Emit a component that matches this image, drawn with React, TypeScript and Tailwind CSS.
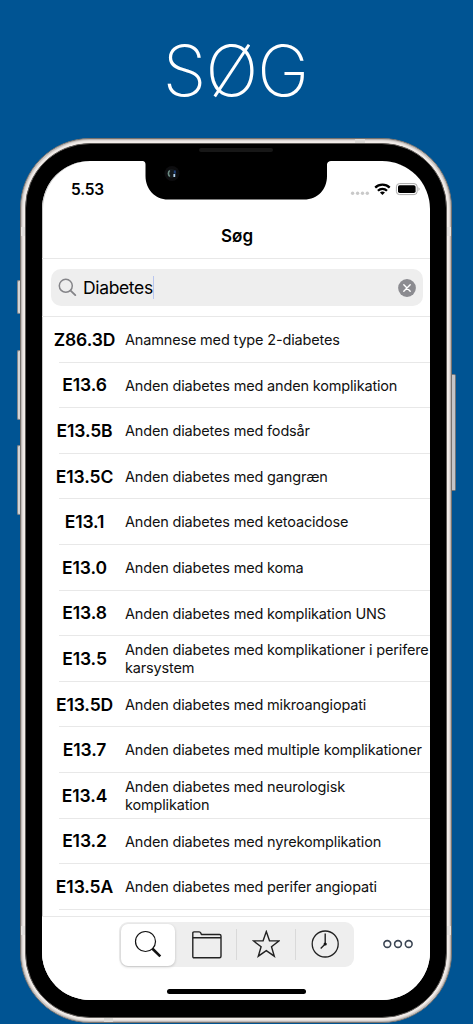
import React, { useState } from "react";

interface Diagnosis {
  code: string;
  title: string;
}

const diagnoses: Diagnosis[] = [
  { code: "Z86.3D", title: "Anamnese med type 2-diabetes" },
  { code: "E13.6", title: "Anden diabetes med anden komplikation" },
  { code: "E13.5B", title: "Anden diabetes med fodsår" },
  { code: "E13.5C", title: "Anden diabetes med gangræn" },
  { code: "E13.1", title: "Anden diabetes med ketoacidose" },
  { code: "E13.0", title: "Anden diabetes med koma" },
  { code: "E13.8", title: "Anden diabetes med komplikation UNS" },
  { code: "E13.5", title: "Anden diabetes med komplikationer i perifere karsystem" },
  { code: "E13.5D", title: "Anden diabetes med mikroangiopati" },
  { code: "E13.7", title: "Anden diabetes med multiple komplikationer" },
  { code: "E13.4", title: "Anden diabetes med neurologisk komplikation" },
  { code: "E13.2", title: "Anden diabetes med nyrekomplikation" },
  { code: "E13.5A", title: "Anden diabetes med perifer angiopati" },
];

function Notch() {
  return (
    <svg className="absolute left-[99px] top-[-1px]" width="192" height="40" viewBox="0 0 192 40">
      <path d="M0 0H192V1H190C188 1 186 2.500 186 4.500V16C186 29 177 39.500 163 39.500H27C14 39.500 4.500 29 4.500 16V4.500C4.500 2.500 3.500 1 1.500 1H0Z" fill="#000" />
      <circle cx="31" cy="13.500" r="7.500" fill="#0d0d0f" />
      <circle cx="30.500" cy="13.500" r="4.600" fill="#14181b" />
      <path d="M28.800 10.500a4 4 0 0 0 0 6" stroke="#6c8c83" strokeWidth="1.600" fill="none" />
      <path d="M33.800 10.500v3" stroke="#1c3e78" strokeWidth="2" />
      <path d="M33.300 14v3" stroke="#b4d4ee" strokeWidth="1.800" />
    </svg>
  );
}

function StatusBar() {
  return (
    <div className="flex h-[57px] shrink-0 justify-between pl-[29px] pr-[10px] pt-[19px]">
      <span className="text-[15.5px] font-semibold leading-[19px] tracking-[-0.2px]">5.53</span>
      <svg width="70" height="18" viewBox="0 0 70 18">
        <g fill="#c9c9c9">
          <circle cx="2.600" cy="13.300" r="1.700" />
          <circle cx="7.600" cy="13.300" r="1.700" />
          <circle cx="12.500" cy="13.300" r="1.700" />
          <circle cx="17.300" cy="13.300" r="1.700" />
        </g>
        <g fill="none" stroke="#000" strokeWidth="2.300">
          <path d="M25.200 7.600a10.500 10.500 0 0 1 14.500 0" />
          <path d="M27.900 10.700a6.500 6.500 0 0 1 9.100 0" />
        </g>
        <path d="M32.450 15l-2.500-2.400a3.600 3.600 0 0 1 5 0z" fill="#000" />
        <rect x="46.400" y="3.600" width="20.800" height="11" rx="3.200" fill="none" stroke="#a9a9a9" />
        <rect x="48" y="5.200" width="17.600" height="7.800" rx="1.700" fill="#000" />
        <path d="M68.500 7.300v3.600c1.400-.6 1.400-3 0-3.600z" fill="#a9a9a9" />
      </svg>
    </div>
  );
}

function SearchField() {
  const [query, setQuery] = useState("Diabetes");

  return (
    <div className="h-[58px] shrink-0 border-b border-[#e8e8e8] pl-[9px] pr-[7px] pt-[10px]">
      <div className="flex h-[37px] items-center rounded-[10px] bg-[#eeeeee] px-[7px]">
        <svg width="19" height="19" viewBox="0 0 19 19" fill="none" stroke="#858589">
          <circle cx="7.800" cy="7.800" r="6.500" strokeWidth="1.500" />
          <path d="M12.600 12.600l4.700 4.500" strokeWidth="1.900" strokeLinecap="round" />
        </svg>
        <div className="ml-[6px] flex flex-1 items-center">
          <span className="text-[17.5px] leading-6 tracking-[-0.35px]">{query}</span>
          <span className="h-[23px] w-px bg-[#b9c6ef]" />
        </div>
        <button onClick={() => setQuery("")}>
          <svg width="18" height="18" viewBox="0 0 18 18">
            <circle cx="9" cy="9" r="8.900" fill="#8b8b90" />
            <path d="M5.800 5.800l6.400 6.400M12.200 5.800l-6.400 6.400" stroke="#fff" strokeWidth="1.400" strokeLinecap="round" />
          </svg>
        </button>
      </div>
    </div>
  );
}

function DiagnosisRow({ code, title }: Diagnosis) {
  return (
    <li className="relative flex h-[45.600px] items-center">
      <span className="ml-px w-[83px] shrink-0 text-center text-[17.5px] font-semibold leading-5 tracking-[-0.1px]">{code}</span>
      <span className="-ml-px w-[306px] shrink-0 text-[14.5px] leading-[17.5px] tracking-[-0.17px] text-[#111]">{title}</span>
      <span className="absolute bottom-0 left-[17px] right-0 h-px bg-[#e8e8e8]" />
    </li>
  );
}

function TabBar() {
  return (
    <div className="flex h-[84px] shrink-0 flex-col items-center border-t border-[#e8e8e8] bg-white pt-[5px]">
      <div className="flex w-full items-center pl-[77px]">
        <div className="flex h-[45px] w-[235px] items-center rounded-[9px] bg-[#eeeeee] pl-[2px]">
          <button className="flex h-[42px] w-[54px] items-center justify-center rounded-[7px] bg-white shadow-[0_1px_3px_rgba(0,0,0,0.2)]">
            <svg className="-mt-px" width="28" height="28" viewBox="0 0 28 28" fill="none" stroke="#111">
              <circle cx="11.500" cy="11.500" r="10" strokeWidth="1.200" />
              <path d="M18.500 18.700l7.800 7.700" strokeWidth="2.600" />
            </svg>
          </button>
          <button className="flex w-[61px] items-center justify-center pl-[2px]">
            <svg width="30" height="28" viewBox="0 0 30 28" fill="none" stroke="#222" strokeWidth="1.400" strokeLinejoin="round">
              <path d="M.8 25.500V2.200Q.8.900 2 .9H7.200Q8.300.900 8.800 2L9.400 3.500H27.500Q29 3.500 29 5V25.200Q29 26.700 27.500 26.700H2Q.8 26.700.8 25.500z" />
              <path d="M.8 6.700H29" />
            </svg>
          </button>
          <span className="h-[31px] w-px bg-[#d9d9d9]" />
          <button className="flex w-[58px] items-center justify-center">
            <svg className="-mt-[2px]" width="28" height="28" viewBox="0 0 28 28" fill="none" stroke="#222" strokeWidth="1.400">
              <path d="M14.300 1.600l3.200 9.100 9.600.2-7.600 5.900 2.800 9.400-8-5.500-8 5.500 2.800-9.400-7.600-5.900 9.600-.2z" />
            </svg>
          </button>
          <span className="h-[31px] w-px bg-[#d9d9d9]" />
          <button className="flex w-[58px] items-center justify-center">
            <svg className="-mt-px" width="28" height="28" viewBox="0 0 28 28" fill="none" stroke="#222" strokeWidth="1.300">
              <circle cx="14.200" cy="14" r="13" />
              <path d="M14.200 3.500V14L9.700 18.500" strokeWidth="1.400" />
              <circle cx="14.200" cy="14" r="1.600" fill="#111" stroke="none" />
            </svg>
          </button>
        </div>
        <button className="-mt-[2px] ml-[29px]">
          <svg width="30" height="10" viewBox="0 0 30 10" fill="none" stroke="#3c4654" strokeWidth="1.600">
            <circle cx="4.300" cy="5" r="3.400" />
            <circle cx="15" cy="5" r="3.400" />
            <circle cx="25.700" cy="5" r="3.400" />
          </svg>
        </button>
      </div>
      <span className="mt-[22px] h-[5px] w-[139px] rounded-full bg-black" />
    </div>
  );
}

function Phone() {
  return (
    <div className="relative ml-5 h-[885px] w-[432px] rounded-[70px] border border-[#77726e] bg-[#f2edea] p-1 shadow-[inset_0_0_2px_1px_#aaa5a2]">
      {/* Side buttons */}
      <span className="absolute left-[-4px] top-[141px] h-[34px] w-[3px] rounded-l-[2px] border border-r-0 border-[#82868b] bg-[#d3d4d6]" />
      <span className="absolute left-[-4px] top-[211px] h-[70px] w-[3px] rounded-l-[2px] border border-r-0 border-[#82868b] bg-[#d3d4d6]" />
      <span className="absolute left-[-4px] top-[306px] h-[70px] w-[3px] rounded-l-[2px] border border-r-0 border-[#82868b] bg-[#d3d4d6]" />
      <span className="absolute right-[-5px] top-[235px] h-[117px] w-[4px] rounded-r-[2px] border border-l-0 border-[#73767a] bg-[#c4c5c8]" />

      {/* Antenna bands */}
      <span className="absolute left-0 top-[88px] h-[9px] w-[5px] bg-[#e3e0de]" />
      <span className="absolute right-0 top-[88px] h-[9px] w-[5px] bg-[#e3e0de]" />
      <span className="absolute left-0 top-[787px] h-[9px] w-[5px] bg-[#e3e0de]" />
      <span className="absolute right-0 top-[787px] h-[9px] w-[5px] bg-[#e3e0de]" />
      <span className="absolute right-[86px] top-0 h-[5px] w-[10px] bg-[#dcd9d6]" />
      <span className="absolute bottom-0 left-[83px] h-[5px] w-[9px] bg-[#dcd9d6]" />

      <div className="relative h-full rounded-[65px] border border-[#5d5a57] bg-black pb-[17px] pl-4 pr-4 pt-[17px]">
        <span className="absolute left-[173px] top-[4px] h-[4px] w-[74px] rounded-full bg-[#171717]" />
        <div className="relative flex h-full flex-col overflow-hidden rounded-[48px] bg-white text-black shadow-[inset_1px_0_0_#c8c8c8]">
          <Notch />
          <StatusBar />
          <h2 className="h-[41px] shrink-0 border-b border-[#e8e8e8] pl-[2px] pt-[6px] text-center text-[17px] font-semibold leading-6">Søg</h2>
          <SearchField />
          <ul className="min-h-0 flex-1 overflow-hidden">
            {diagnoses.map((d) => (
              <DiagnosisRow key={d.code} code={d.code} title={d.title} />
            ))}
          </ul>
          <TabBar />
        </div>
      </div>
    </div>
  );
}

export default function App() {
  return (
    <div className="h-[1024px] w-[473px] overflow-hidden bg-[#005493] font-['Inter','Liberation_Sans',sans-serif]">
      <h1 className="h-[138px] pr-[2px] pt-[30px] text-center text-[70px] font-extralight leading-[82px] tracking-[-0.8px] text-white">SØG</h1>
      <Phone />
    </div>
  );
}
